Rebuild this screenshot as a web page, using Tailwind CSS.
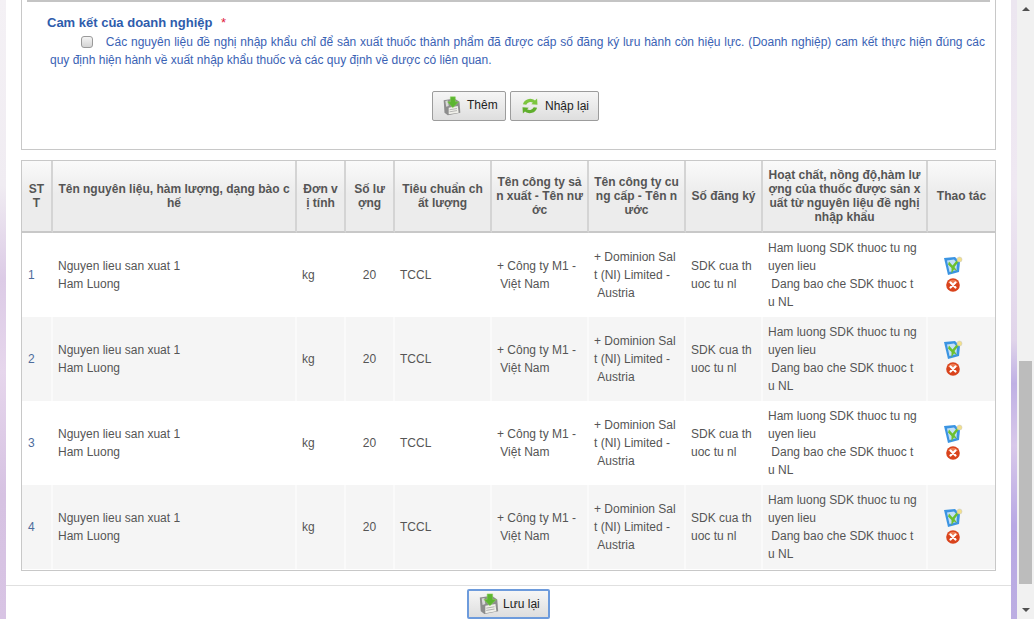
<!DOCTYPE html>
<html lang="vi">
<head>
  <meta charset="UTF-8" />
  <meta name="viewport" content="width=device-width, initial-scale=1.0" />
  <title>Cam kết của doanh nghiệp</title>
  <script src="https://cdn.jsdelivr.net/npm/@tailwindcss/browser@4"></script>
</head>
<body class="h-[619px] overflow-hidden bg-white font-['Liberation_Sans',Arial,sans-serif] text-[12px] text-[#555]">
<svg class="hidden">
  <symbol id="save" viewBox="0 0 24 24">
    <path d="M2 5 L15 3 L21 7 L22 20 L7 23 L3 20 Z" fill="#8d8d8d"/>
    <path d="M8 14 L19 12 L20 20 L8 22 Z" fill="#f0f0ea"/>
    <path d="M9 16.5 L18 15 M9 19 L18 17.5" stroke="#aaa" stroke-width="1"/>
    <path d="M4 6 L7 5.5 L8 12 L5 13 Z" fill="#d8d8d8"/>
    <path d="M10 1 H16 V7 H20 L13 14 L6.500 7 H10 Z" fill="#5cb531" stroke="#8ad45c" stroke-width=".6"/>
  </symbol>
  <symbol id="refresh" viewBox="0 0 24 24">
    <path d="M3.500 10 A9 9 0 0 1 18 5.500 L20.500 3 L21 10.500 L13.500 10 L15.500 8 A5.500 5.500 0 0 0 7.500 10.500 Z" fill="#7cc63f"/>
    <path d="M20.500 14 A9 9 0 0 1 6 18.500 L3.500 21 L3 13.500 L10.500 14 L8.500 16 A5.500 5.500 0 0 0 16.500 13.500 Z" fill="#5fae2c"/>
  </symbol>
  <symbol id="edit" viewBox="0 0 20 20">
    <path d="M1 2 L12 1 L17 6 L16 16 L5 19 Z" fill="#3b94e2"/>
    <path d="M4 4.500 L11 3.500 L14 7 L13.500 14 L6.500 16 Z" fill="#c4e0f7"/>
    <path d="M6 5.500 L9.500 9.500 L14.500 3.500 L15.500 6 L11.500 11 L14 15 L11 13.500 L8.500 17.500 L8.500 12 L5 8.500 Z" fill="#6cc030"/>
    <circle cx="16.500" cy="3.500" r="2.500" fill="#f3e08a" stroke="#c4c4c4" stroke-width=".5"/>
  </symbol>
  <symbol id="del" viewBox="0 0 14 14">
    <circle cx="7" cy="7" r="6.800" fill="#d9431c"/>
    <path d="M2 5 A5.500 5.500 0 0 1 12 5 Z" fill="#ee7a50"/>
    <path d="M4.500 4.500 L9.500 9.500 M9.500 4.500 L4.500 9.500" stroke="#fff" stroke-width="2.200" stroke-linecap="round"/>
  </symbol>
</svg>

<div class="flex h-[619px]">
  <div class="w-[6px] shrink-0 bg-[linear-gradient(180deg,#f4f1f5_0%,#f0ecf2_30%,#dccbe6_45%,#e6d6ec_60%,#d6c2e2_80%,#d8c4e4_100%)]"></div>

  <!-- NOI DUNG -->
  <div class="w-[1005px] shrink-0 flex flex-col">
    <div class="mx-[15px] w-[975px] h-[150px] border-x border-b border-[#c8c8c8] shrink-0">
      <div class="mx-[5px] border-t-2 border-[#c4c4c4] h-0"></div>
      <div class="pt-[13px] pl-[25px] font-bold text-[13px] leading-[15px] text-[#2e5cac]">
        Cam kết của doanh nghiệp <span class="ml-[5px] font-normal text-[#e0203c]">*</span>
      </div>
      <p class="ml-[28px] mr-[10px] mt-[3px] text-[12px] leading-[18px] text-[#3a62b4] text-justify">
        <input type="checkbox" class="appearance-none inline-block align-[-2px] w-[12px] h-[12px] ml-[31px] mr-[9px] rounded-[3px] border border-[#9a9a9a] bg-[linear-gradient(180deg,#f4f4f4,#d4d4d4)]" />
        Các nguyên liệu đề nghị nhập khẩu chỉ để sản xuất thuốc thành phẩm đã được cấp số đăng ký lưu hành còn hiệu lực. (Doanh nghiệp) cam kết thực hiện đúng các quy định hiện hành về xuất nhập khẩu thuốc và các quy định về dược có liên quan.
      </p>
      <div class="flex justify-center gap-[4px] mt-[22px] pl-[14px]">
        <button class="flex items-center h-[30px] w-[74px] pl-[9px] gap-[5px] border border-[#9c9c9c] rounded-[2px] bg-[linear-gradient(180deg,#f6f6f6,#dedede)] text-[#222] text-[12px]">
          <svg class="w-[20px] h-[22px]"><use href="#save"/></svg><span class="-mt-[3px]">Thêm</span>
        </button>
        <button class="flex items-center h-[30px] w-[89px] pl-[9px] gap-[5px] border border-[#9c9c9c] rounded-[2px] bg-[linear-gradient(180deg,#f6f6f6,#dedede)] text-[#222] text-[12px]">
          <svg class="w-[20px] h-[20px]"><use href="#refresh"/></svg><span>Nhập lại</span>
        </button>
      </div>
    </div>

    <div class="mx-[15px] mt-[10px] w-[975px] h-[411px] border border-[#c8c8c8] shrink-0">
      <table class="table-fixed w-[973px] border-separate border-spacing-0 [word-break:break-all]">
        <colgroup>
          <col class="w-[31px]" /><col class="w-[244px]" /><col class="w-[49px]" /><col class="w-[49px]" /><col class="w-[97px]" /><col class="w-[97px]" /><col class="w-[97px]" /><col class="w-[77px]" /><col class="w-[165px]" /><col class="w-[67px]" />
        </colgroup>
        <thead>
          <tr class="h-[72px] bg-[linear-gradient(180deg,#fafafa,#ececec_45%)] text-[#555] font-bold text-[12px] leading-[14px] text-center">
            <th class="px-[6px] border-r-2 border-b-2 border-r-[#d4d4d4] border-b-[#c8c8c8]">STT</th>
            <th class="px-[4px] border-r-2 border-b-2 border-r-[#d4d4d4] border-b-[#c8c8c8]">Tên nguyên liệu, hàm lượng, dạng bào chế</th>
            <th class="px-[6px] border-r-2 border-b-2 border-r-[#d4d4d4] border-b-[#c8c8c8]">Đơn vị tính</th>
            <th class="px-[6px] border-r-2 border-b-2 border-r-[#d4d4d4] border-b-[#c8c8c8]">Số lượng</th>
            <th class="px-[5px] border-r-2 border-b-2 border-r-[#d4d4d4] border-b-[#c8c8c8]">Tiêu chuẩn chất lượng</th>
            <th class="px-[4px] border-r-2 border-b-2 border-r-[#d4d4d4] border-b-[#c8c8c8]">Tên công ty sản xuất - Tên nước</th>
            <th class="px-[4px] border-r-2 border-b-2 border-r-[#d4d4d4] border-b-[#c8c8c8]">Tên công ty cung cấp - Tên nước</th>
            <th class="px-[3px] border-r-2 border-b-2 border-r-[#d4d4d4] border-b-[#c8c8c8]">Số đăng ký</th>
            <th class="px-[3px] border-r-2 border-b-2 border-r-[#d4d4d4] border-b-[#c8c8c8]">Hoạt chất, nồng độ,hàm lượng của thuốc được sản xuất từ nguyên liệu đề nghị nhập khẩu</th>
            <th class="px-[5px] border-b-2 border-b-[#c8c8c8]">Thao tác</th>
          </tr>
        </thead>
        <tbody class="leading-[18px]">
          <tr class="h-[84px]">
            <td class="pl-[6px] pr-[4px] text-[#4d6c9c] border-r-2 border-white">1</td>
            <td class="pl-[5px] pr-[6px] border-r-2 border-white">Nguyen lieu san xuat 1<br />Ham Luong</td>
            <td class="pl-[5px] pr-[6px] border-r-2 border-white">kg</td>
            <td class="px-[5px] text-center border-r-2 border-white">20</td>
            <td class="pl-[5px] pr-[6px] border-r-2 border-white">TCCL</td>
            <td class="pl-[5px] pr-[6px] border-r-2 border-white">+ Công ty M1 -<br />&nbsp;Việt Nam</td>
            <td class="pl-[5px] pr-[6px] border-r-2 border-white">+ Dominion Salt (NI) Limited -<br />&nbsp;Austria</td>
            <td class="pl-[5px] pr-[6px] border-r-2 border-white">SDK cua thuoc tu nl</td>
            <td class="pl-[5px] pr-[6px] border-r-2 border-white">Ham luong SDK thuoc tu nguyen lieu<br />&nbsp;Dang bao che SDK thuoc tu NL</td>
            <td class="pr-[17px]"><div class="flex flex-col items-center gap-[2px] pb-[3px]"><svg class="w-[20px] h-[20px]"><use href="#edit"/></svg><svg class="w-[14px] h-[14px]"><use href="#del"/></svg></div></td>
          </tr>
          <tr class="h-[84px] bg-[#f5f5f5]">
            <td class="pl-[6px] pr-[4px] text-[#4d6c9c] border-r-2 border-[#fafafa]">2</td>
            <td class="pl-[5px] pr-[6px] border-r-2 border-[#fafafa]">Nguyen lieu san xuat 1<br />Ham Luong</td>
            <td class="pl-[5px] pr-[6px] border-r-2 border-[#fafafa]">kg</td>
            <td class="px-[5px] text-center border-r-2 border-[#fafafa]">20</td>
            <td class="pl-[5px] pr-[6px] border-r-2 border-[#fafafa]">TCCL</td>
            <td class="pl-[5px] pr-[6px] border-r-2 border-[#fafafa]">+ Công ty M1 -<br />&nbsp;Việt Nam</td>
            <td class="pl-[5px] pr-[6px] border-r-2 border-[#fafafa]">+ Dominion Salt (NI) Limited -<br />&nbsp;Austria</td>
            <td class="pl-[5px] pr-[6px] border-r-2 border-[#fafafa]">SDK cua thuoc tu nl</td>
            <td class="pl-[5px] pr-[6px] border-r-2 border-[#fafafa]">Ham luong SDK thuoc tu nguyen lieu<br />&nbsp;Dang bao che SDK thuoc tu NL</td>
            <td class="pr-[17px]"><div class="flex flex-col items-center gap-[2px] pb-[3px]"><svg class="w-[20px] h-[20px]"><use href="#edit"/></svg><svg class="w-[14px] h-[14px]"><use href="#del"/></svg></div></td>
          </tr>
          <tr class="h-[84px]">
            <td class="pl-[6px] pr-[4px] text-[#4d6c9c] border-r-2 border-white">3</td>
            <td class="pl-[5px] pr-[6px] border-r-2 border-white">Nguyen lieu san xuat 1<br />Ham Luong</td>
            <td class="pl-[5px] pr-[6px] border-r-2 border-white">kg</td>
            <td class="px-[5px] text-center border-r-2 border-white">20</td>
            <td class="pl-[5px] pr-[6px] border-r-2 border-white">TCCL</td>
            <td class="pl-[5px] pr-[6px] border-r-2 border-white">+ Công ty M1 -<br />&nbsp;Việt Nam</td>
            <td class="pl-[5px] pr-[6px] border-r-2 border-white">+ Dominion Salt (NI) Limited -<br />&nbsp;Austria</td>
            <td class="pl-[5px] pr-[6px] border-r-2 border-white">SDK cua thuoc tu nl</td>
            <td class="pl-[5px] pr-[6px] border-r-2 border-white">Ham luong SDK thuoc tu nguyen lieu<br />&nbsp;Dang bao che SDK thuoc tu NL</td>
            <td class="pr-[17px]"><div class="flex flex-col items-center gap-[2px] pb-[3px]"><svg class="w-[20px] h-[20px]"><use href="#edit"/></svg><svg class="w-[14px] h-[14px]"><use href="#del"/></svg></div></td>
          </tr>
          <tr class="h-[84px] bg-[#f5f5f5]">
            <td class="pl-[6px] pr-[4px] text-[#4d6c9c] border-r-2 border-[#fafafa]">4</td>
            <td class="pl-[5px] pr-[6px] border-r-2 border-[#fafafa]">Nguyen lieu san xuat 1<br />Ham Luong</td>
            <td class="pl-[5px] pr-[6px] border-r-2 border-[#fafafa]">kg</td>
            <td class="px-[5px] text-center border-r-2 border-[#fafafa]">20</td>
            <td class="pl-[5px] pr-[6px] border-r-2 border-[#fafafa]">TCCL</td>
            <td class="pl-[5px] pr-[6px] border-r-2 border-[#fafafa]">+ Công ty M1 -<br />&nbsp;Việt Nam</td>
            <td class="pl-[5px] pr-[6px] border-r-2 border-[#fafafa]">+ Dominion Salt (NI) Limited -<br />&nbsp;Austria</td>
            <td class="pl-[5px] pr-[6px] border-r-2 border-[#fafafa]">SDK cua thuoc tu nl</td>
            <td class="pl-[5px] pr-[6px] border-r-2 border-[#fafafa]">Ham luong SDK thuoc tu nguyen lieu<br />&nbsp;Dang bao che SDK thuoc tu NL</td>
            <td class="pr-[17px]"><div class="flex flex-col items-center gap-[2px] pb-[3px]"><svg class="w-[20px] h-[20px]"><use href="#edit"/></svg><svg class="w-[14px] h-[14px]"><use href="#del"/></svg></div></td>
          </tr>
        </tbody>
      </table>
    </div>

    <div class="mt-[14px] border-t border-[#e0e0e0] pt-[3px] flex justify-center">
      <button class="flex items-center h-[30px] w-[83px] pl-[9px] gap-[3px] border-2 border-[#6d9bdc] rounded-[2px] bg-[linear-gradient(180deg,#f6f6f6,#dedede)] text-[#222] text-[12px]">
        <svg class="w-[22px] h-[22px]"><use href="#save"/></svg><span>Lưu lại</span>
      </button>
    </div>
  </div>

  <div class="w-[6px] shrink-0 bg-[linear-gradient(180deg,#ece6f0_0%,#efe8f2_30%,#e0d4ea_55%,#bfb0e4_62%,#d8c8ea_72%,#b8a8e4_85%,#bcaee2_100%)]"></div>

  <!-- THANH CUON -->
  <div class="w-[17px] shrink-0 bg-[#f1f1f1] flex flex-col items-center">
    <div class="mt-[7px] h-0 w-0 border-x-[4px] border-b-[4px] border-x-transparent border-b-[#505050]"></div>
    <div class="mt-[350px] h-[223px] w-[13px] bg-[#bcbcbc]"></div>
    <div class="mt-[24px] h-0 w-0 border-x-[4px] border-t-[4px] border-x-transparent border-t-[#505050]"></div>
  </div>
</div>
</body>
</html>
